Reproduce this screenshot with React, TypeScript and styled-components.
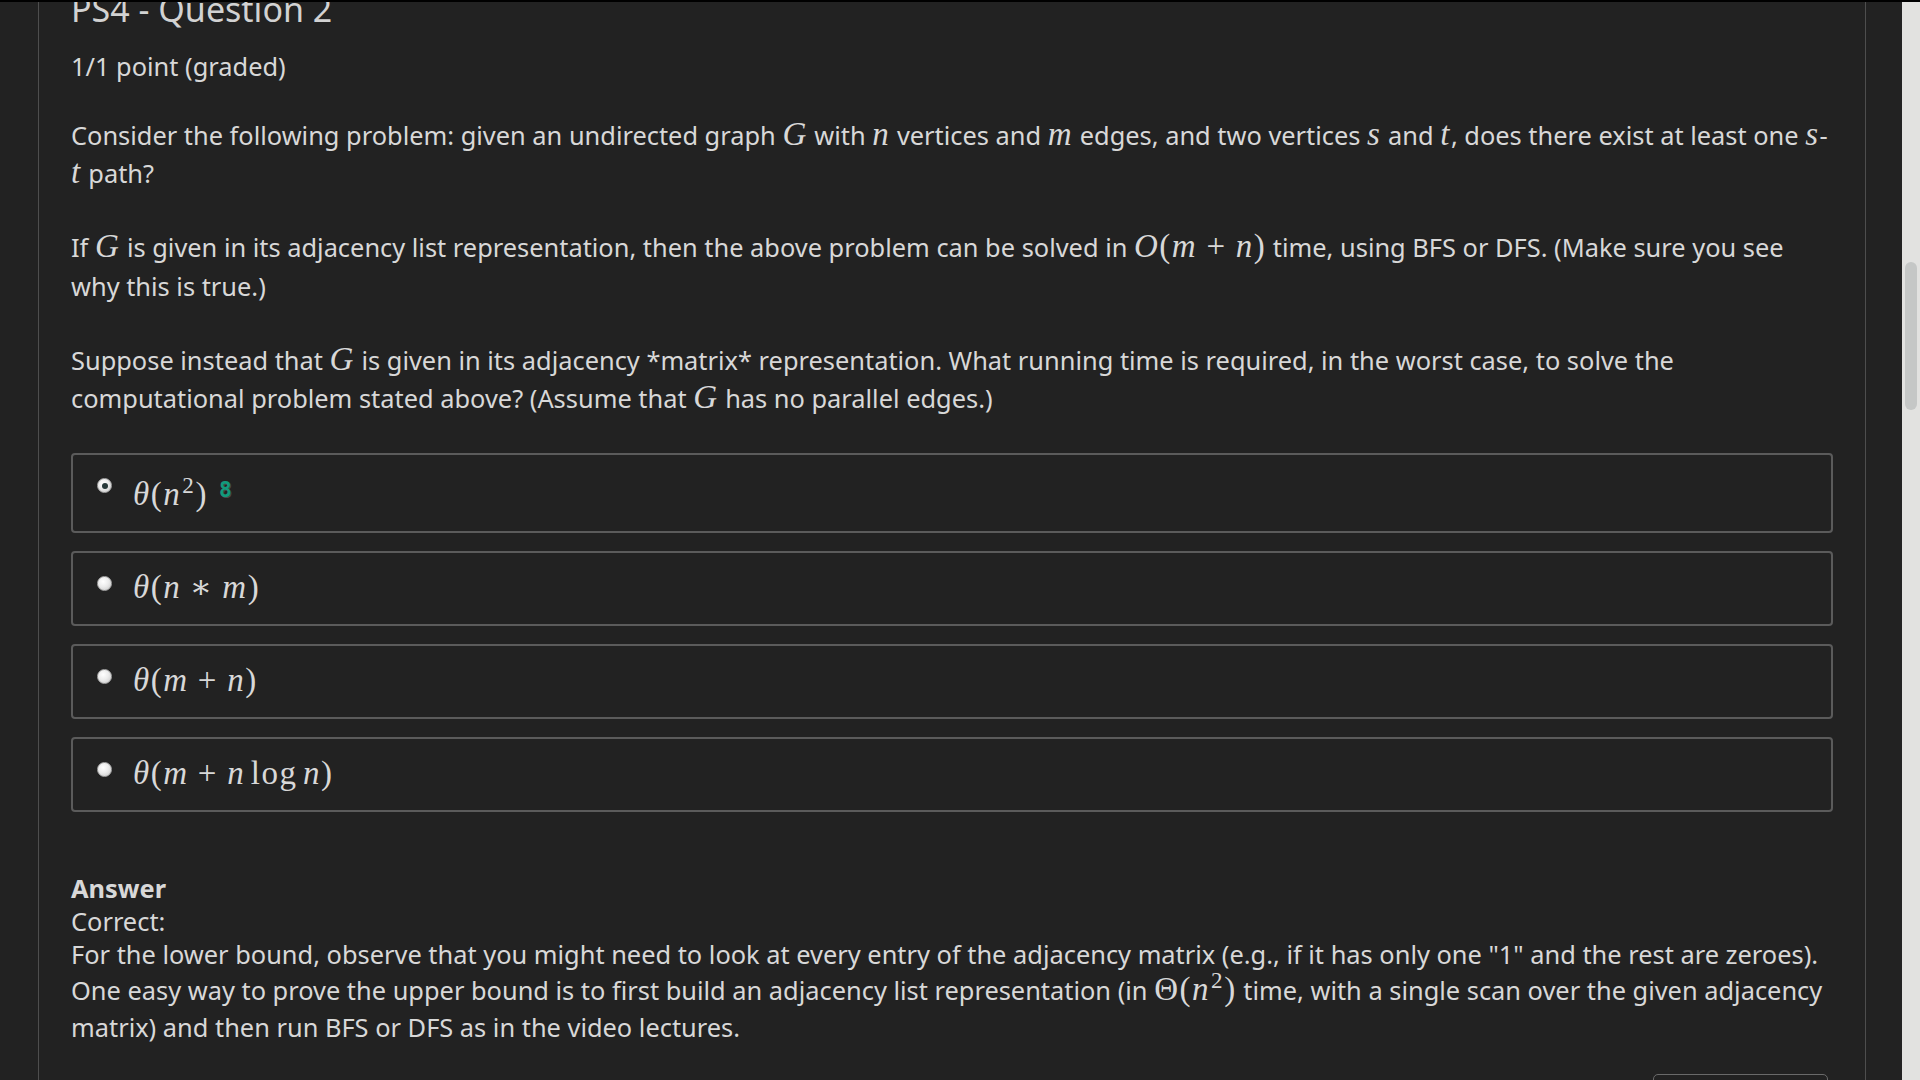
import React from "react";
import styled, { createGlobalStyle } from "styled-components";

const GlobalStyle = createGlobalStyle`
  html, body {
    margin: 0;
    padding: 0;
    height: 100%;
    overflow: hidden;
    background: #222222;
  }
  #root {
    height: 100%;
  }
`;

const Window = styled.div`
  box-sizing: border-box;
  height: 100vh;
  display: flex;
  flex-direction: column;
  border-top: 2px solid #000;
  background: #222222;
`;

const Body = styled.div`
  flex: 1;
  min-height: 0;
  display: flex;
`;

const Viewport = styled.main`
  flex: 1;
  min-width: 0;
  overflow: hidden;
`;

const Column = styled.section`
  box-sizing: border-box;
  width: 1828px;
  min-height: 100%;
  margin-left: 38px;
  padding: 0 32px;
  border-left: 1px solid #4e4e4e;
  border-right: 1px solid #4e4e4e;
  font-family: "Noto Sans", "Open Sans", sans-serif;
  font-size: 25.4px;
  color: #d8d8d8;
`;

const Heading = styled.h2`
  margin: -13px 0 18px;
  font-size: 34px;
  line-height: 40px;
  font-weight: 400;
  color: #d2d2d2;
`;

const Points = styled.div`
  line-height: 38px;
  margin-bottom: 30.5px;
`;

const Para = styled.p`
  margin: 0 0 35.5px;
  line-height: 38.5px;
`;

const MathRun = styled.span`
  font-family: "Liberation Serif", "DejaVu Serif", serif;
  font-size: 1.3em;
  letter-spacing: 0.045em;
  line-height: 1;
  font-style: normal;
  white-space: nowrap;
`;

const Var = styled.i`
  font-style: italic;
`;

const Op = styled.span<{ $space?: number }>`
  font-style: normal;
  padding: 0 ${(p) => p.$space ?? 0}em;
`;

const Sup = styled.span`
  font-size: 0.7em;
  vertical-align: 0.5em;
  line-height: 0;
  padding-left: 0.05em;
`;

const OptionList = styled.div`
  display: flex;
  flex-direction: column;
  gap: 18px;
  margin-top: 33px;
`;

const Option = styled.label`
  box-sizing: border-box;
  display: flex;
  align-items: flex-start;
  gap: 21px;
  padding: 16px 24px;
  border: 2px solid #5b5b5b;
  border-radius: 4px;
`;

const Radio = styled.span<{ $checked?: boolean }>`
  flex: none;
  box-sizing: border-box;
  width: 15px;
  height: 15px;
  margin-top: 7px;
  border-radius: 50%;
  border: 1px solid #a9a9a9;
  background: radial-gradient(circle at 40% 35%, #ffffff 0%, #ececec 45%, #c4c4c4 100%);
  display: flex;
  align-items: center;
  justify-content: center;

  &::after {
    content: "";
    display: ${(p) => (p.$checked ? "block" : "none")};
    width: 6px;
    height: 6px;
    border-radius: 50%;
    background: #27393a;
  }
`;

const OptionText = styled.span<{ $tall?: boolean }>`
  display: block;
  line-height: 39px;
  padding-top: ${(p) => (p.$tall ? "5px" : "0")};
`;

const Badge = styled.span`
  margin-left: 11px;
  font-family: "DejaVu Sans Mono", "Liberation Mono", monospace;
  font-weight: 700;
  font-size: 21px;
  line-height: 1;
  color: #129a7c;
  text-shadow: 1px 1px 0 #4a4a4a;
  position: relative;
  top: -8px;
`;

const AnswerBlock = styled.div`
  margin-top: 60px;
`;

const AnswerTitle = styled.div`
  font-weight: 700;
  line-height: 33px;
`;

const AnswerLine = styled.div`
  line-height: 33px;
`;

const Explanation = styled.div`
  margin-top: -2.5px;
  line-height: 36.5px;
`;

const Actions = styled.div`
  display: flex;
  justify-content: flex-end;
  padding-right: 5px;
  margin-top: 29px;
`;

const GhostButton = styled.button`
  width: 175px;
  height: 44px;
  border: 1px solid #6a6a6a;
  border-radius: 5px;
  background: transparent;
`;

const ScrollTrack = styled.aside`
  flex: none;
  width: 18px;
  background: #e2e2e0;
  display: flex;
  flex-direction: column;
  align-items: center;
`;

const ScrollThumb = styled.div`
  width: 12px;
  height: 148px;
  margin-top: 260px;
  border-radius: 6px;
  background: #c5c7c6;
`;

const V = ({ children }: { children: React.ReactNode }) => (
  <MathRun>
    <Var>{children}</Var>
  </MathRun>
);

type OptionData = { content: React.ReactNode; checked?: boolean; badge?: string; tall?: boolean };

const options: OptionData[] = [
  {
    checked: true,
    tall: true,
    badge: "8",
    content: (
      <MathRun>
        <Var>θ</Var>
        <Op>(</Op>
        <Var>n</Var>
        <Sup>2</Sup>
        <Op>)</Op>
      </MathRun>
    ),
  },
  {
    content: (
      <MathRun>
        <Var>θ</Var>
        <Op>(</Op>
        <Var>n</Var>
        <Op $space={0.26}>∗</Op>
        <Var>m</Var>
        <Op>)</Op>
      </MathRun>
    ),
  },
  {
    content: (
      <MathRun>
        <Var>θ</Var>
        <Op>(</Op>
        <Var>m</Var>
        <Op $space={0.28}>+</Op>
        <Var>n</Var>
        <Op>)</Op>
      </MathRun>
    ),
  },
  {
    content: (
      <MathRun>
        <Var>θ</Var>
        <Op>(</Op>
        <Var>m</Var>
        <Op $space={0.28}>+</Op>
        <Var>n</Var>
        <Op $space={0.17}>log</Op>
        <Var>n</Var>
        <Op>)</Op>
      </MathRun>
    ),
  },
];

export default function App() {
  return (
    <>
      <GlobalStyle />
      <Window>
        <Body>
          <Viewport>
            <Column>
              <Heading>PS4 - Question 2</Heading>
              <Points>1/1 point (graded)</Points>

              <Para>
                Consider the following problem: given an undirected graph <V>G</V> with <V>n</V> vertices and{" "}
                <V>m</V> edges, and two vertices <V>s</V> and <V>t</V>, does there exist at least one <V>s</V>-
                <V>t</V> path?
              </Para>

              <Para>
                If <V>G</V> is given in its adjacency list representation, then the above problem can be solved in{" "}
                <MathRun>
                  <Var>O</Var>
                  <Op>(</Op>
                  <Var>m</Var>
                  <Op $space={0.28}>+</Op>
                  <Var>n</Var>
                  <Op>)</Op>
                </MathRun>{" "}
                time, using BFS or DFS. (Make sure you see why this is true.)
              </Para>

              <Para>
                Suppose instead that <V>G</V> is given in its adjacency *matrix* representation. What running time is
                required, in the worst case, to solve the computational problem stated above? (Assume that <V>G</V>{" "}
                has no parallel edges.)
              </Para>

              <OptionList>
                {options.map((o, i) => (
                  <Option key={i}>
                    <Radio $checked={o.checked} />
                    <OptionText $tall={o.tall}>
                      {o.content}
                      {o.badge && <Badge>{o.badge}</Badge>}
                    </OptionText>
                  </Option>
                ))}
              </OptionList>

              <AnswerBlock>
                <AnswerTitle>Answer</AnswerTitle>
                <AnswerLine>Correct:</AnswerLine>
                <Explanation>
                  For the lower bound, observe that you might need to look at every entry of the adjacency matrix
                  (e.g., if it has only one "1" and the rest are zeroes).
                  <br />
                  One easy way to prove the upper bound is to first build an adjacency list representation (in{" "}
                  <MathRun>
                    <Op>Θ</Op>
                    <Op>(</Op>
                    <Var>n</Var>
                    <Sup>2</Sup>
                    <Op>)</Op>
                  </MathRun>{" "}
                  time, with a single scan over the given adjacency matrix) and then run BFS or DFS as in the video
                  lectures.
                </Explanation>
              </AnswerBlock>

              <Actions>
                <GhostButton type="button" aria-label="Submit" />
              </Actions>
            </Column>
          </Viewport>
          <ScrollTrack>
            <ScrollThumb />
          </ScrollTrack>
        </Body>
      </Window>
    </>
  );
}
